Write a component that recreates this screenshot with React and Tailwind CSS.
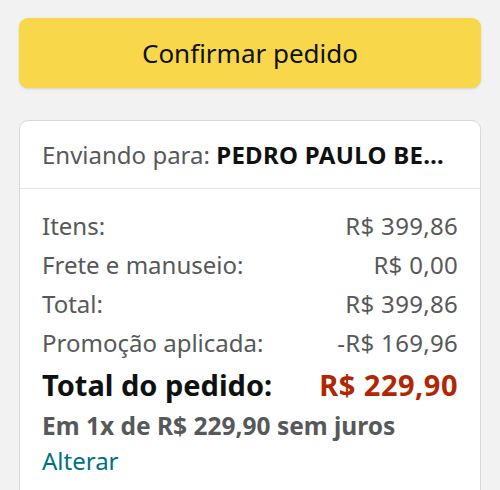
export default function App() {
  const rows = [
    ['Itens:', 'R$ 399,86'],
    ['Frete e manuseio:', 'R$ 0,00'],
    ['Total:', 'R$ 399,86'],
    ['Promoção aplicada:', '-R$ 169,96'],
  ];

  return (
    <div className="min-h-[490px] bg-[#f2f2f2] px-[19px] pt-[18px] pb-6 font-['Noto_Sans',sans-serif]">
      <button className="w-full h-[70px] rounded-[9px] bg-[#f8d84a] text-[#0f1111] text-[26px] shadow-sm">
        Confirmar pedido
      </button>

      <div className="mt-[32px] bg-white border border-[#d5d9d9] rounded-[9px]">
        <div className="h-[68px] flex items-center pl-[22px] pr-[24px] border-b border-[#e3e6e6] text-[24px] whitespace-nowrap overflow-hidden">
          <span className="text-[#565959]">Enviando para:&nbsp;</span>
          <span className="font-bold text-[#0f1111] truncate tracking-[0.3px]">PEDRO PAULO BERNARDES</span>
        </div>

        <div className="px-[22px] pt-[17px] pb-8">
          {rows.map(([label, value]) => (
            <div key={label} className="flex justify-between items-center h-[39px] text-[24px] text-[#565959]">
              <span>{label}</span>
              <span className="tracking-[0.3px]">{value}</span>
            </div>
          ))}
          <div className="flex justify-between items-center h-[46px] text-[29px] font-bold">
            <span className="text-[#0f1111]">Total do pedido:</span>
            <span className="text-[#b12704] tracking-[0.5px]">R$ 229,90</span>
          </div>
          <div className="h-[36px] flex items-center text-[24.5px] font-bold text-[#565959]">
            Em 1x de R$ 229,90 sem juros
          </div>
          <div className="h-[34px] flex items-center text-[24px] text-[#007185]">Alterar</div>
        </div>
      </div>
    </div>
  );
}
